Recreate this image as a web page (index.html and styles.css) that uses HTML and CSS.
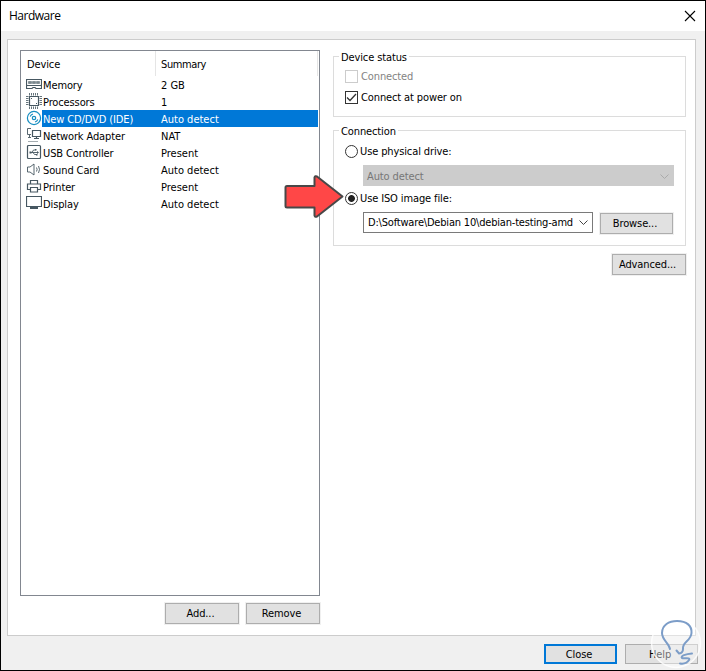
FILE: index.html
```html
<!DOCTYPE html>
<html lang="en">
<head>
<meta charset="utf-8">
<title>Hardware</title>
<link rel="stylesheet" href="styles.css">
</head>
<body>
<div class="window">
  <header class="titlebar">
    <span class="title">Hardware</span>
    <svg class="close-icon" width="12" height="12" viewBox="0 0 12 12"><path d="M1 1L11 11M11 1L1 11"/></svg>
  </header>
  <main class="panel">
    <section class="left">
      <div class="list">
        <div class="row head"><span class="device">Device</span><span class="summary">Summary</span></div>
        <div class="row"><svg class="icon" viewBox="0 0 16 16"><path d="M.5 3.500h15v6h-15zM.5 9.500v3H6l1-1h2l1 1h5.500v-3"/><path class="chips" d="M2.500 5.500h3v2h-3zM6.500 5.500h3v2h-3zM10.500 5.500h3v2h-3z"/></svg><span class="device">Memory</span><span class="summary">2 GB</span></div>
        <div class="row"><svg class="icon" viewBox="0 0 16 16"><path d="M3.500 3.500h9v9h-9z"/><path class="pins" d="M3.500 0v2.500M5.500 0v2.500M7.500 0v2.500M9.500 0v2.500M11.500 0v2.500M3.500 13.500V16M5.500 13.500V16M7.500 13.500V16M9.500 13.500V16M11.500 13.500V16M0 3.500h2.500M0 5.500h2.500M0 7.500h2.500M0 9.500h2.500M0 11.500h2.500M13.500 3.500H16M13.500 5.500H16M13.500 7.500H16M13.500 9.500H16M13.500 11.500H16"/><path d="M5 5.500h1M10 10.500h1"/></svg><span class="device">Processors</span><span class="summary">1</span></div>
        <div class="row selected"><svg class="icon disc" viewBox="0 0 16 16"><circle cx="8" cy="8" r="6.600"/><circle cx="8" cy="8" r="1.700"/><path d="M4.200 6.500Q5 4.500 7 4M11.800 9.500Q11 11.500 9 12"/></svg><span class="device">New CD/DVD (IDE)</span><span class="summary">Auto detect</span></div>
        <div class="row"><svg class="icon" viewBox="0 0 16 16"><path d="M6.500 3.500h8v6h-8zM10.500 9.500v2M8 11.500h5"/><path class="thin" d="M5 1.500H1.500v6H5M3.500 8v2M2 10.500h3"/><path class="dash" d="M2.500 14.500h9"/></svg><span class="device">Network Adapter</span><span class="summary">NAT</span></div>
        <div class="row"><svg class="icon" viewBox="0 0 16 16"><rect x="1.500" y="1.500" width="13" height="13" rx="1"/><path class="thin" d="M4 8.500h8M6 8.500l1.500-2.500h2M7 8.500l1.500 2h2"/><path class="fill" d="M3.500 7.500h2v2h-2zM9 5h1.500v1.500H9zM10 10h1.500v1.500H10zM11 7l2 1.500-2 1.500z"/></svg><span class="device">USB Controller</span><span class="summary">Present</span></div>
        <div class="row"><svg class="icon" viewBox="0 0 16 16"><path class="thin" d="M1.500 6v5h2.500l4 3V3l-4 3zM10.500 6.500q1.200 2 0 4M12.500 5q2 3.500 0 7"/></svg><span class="device">Sound Card</span><span class="summary">Auto detect</span></div>
        <div class="row"><svg class="icon" viewBox="0 0 16 16"><path d="M4.500 6V2.500h7V6M4 11.500H1.500v-5.500h13v5.500H12M4.500 9.500h7v4.500h-7z"/></svg><span class="device">Printer</span><span class="summary">Present</span></div>
        <div class="row"><svg class="icon" viewBox="0 0 16 16"><path d="M.5 1.500h15v10h-15z"/><path class="stand" d="M4 13h8"/></svg><span class="device">Display</span><span class="summary">Auto detect</span></div>
      </div>
      <div class="actions"><button>Add...</button><button>Remove</button></div>
    </section>
    <section class="right">
      <div class="group status">
        <span class="legend">Device status</span>
        <label class="option muted"><span class="box"></span>Connected</label>
        <label class="option"><span class="box on"><svg width="11" height="11" viewBox="0 0 11 11"><path d="M1 5.500L4 8.500L10 2"/></svg></span>Connect at power on</label>
      </div>
      <div class="group connection">
        <span class="legend">Connection</span>
        <label class="option"><span class="radio"></span><span>Use physical drive:</span></label>
        <div class="combo disabled"><span>Auto detect</span><svg class="chevron" width="9" height="5" viewBox="0 0 9 5"><path d="M.5.5l4 4 4-4"/></svg></div>
        <label class="option iso"><span class="radio on"></span><span>Use ISO image file:</span></label>
        <div class="file">
          <div class="combo"><span class="path">D:\Software\Debian 10\debian-testing-amd</span><svg class="chevron" width="9" height="5" viewBox="0 0 9 5"><path d="M.5.5l4 4 4-4"/></svg></div>
          <button>Browse...</button>
        </div>
      </div>
      <button class="advanced">Advanced...</button>
    </section>
  </main>
  <footer class="footer"><button class="primary">Close</button><button>Help</button></footer>
  <svg class="arrow" width="64" height="48" viewBox="0 0 64 48"><path d="M5.500 15.500Q5.500 14 7 14H34.500V5.500Q35 3.500 37 4.500L62.500 24.500L37 44.500Q35 45.500 34.500 43.500V35.500H7Q5.500 35.500 5.500 34z"/></svg>
  <svg class="watermark" width="54" height="54" viewBox="0 0 54 54"><circle class="disk" cx="26" cy="27" r="24.500"/><path class="bulb" d="M20 33C19 27 12 24 12 17C12 9 19 5 27 5C37 5 42 10 41.500 17C41 25 32 26 33 33Q33 37 29 37.500L26.500 34.500M42 37.500C36 38 30 40 32 42C34 43 41 41 39 44C37 47 33 48 30 47.500"/></svg>
</div>
</body>
</html>
```
FILE: styles.css
```css
* { box-sizing: border-box; }
body { margin: 0; font: 11px/17px "DejaVu Sans Condensed", "DejaVu Sans", sans-serif; font-stretch: condensed; letter-spacing: -.12px; color: #000; }
svg { fill: none; display: block; flex: none; }
.window { position: relative; width: 706px; height: 671px; border: 1px solid #000; background: #f0f0f0; overflow: hidden; }
.titlebar { height: 30px; background: #fff; display: flex; align-items: center; justify-content: space-between; padding: 0 9px 0 8px; }
.title { font: 12px/16px "Open Sans", sans-serif; letter-spacing: -.5px; }
.close-icon { stroke: #000; stroke-width: 1.1; }
.panel { height: 597px; margin: 8px 9px 0 6px; border: 1px solid #ccc; background: #fff; padding: 10px 0 0 12px; display: flex; gap: 13px; }
.left { width: 300px; }
.list { height: 546px; border: 1px solid #828790; padding-right: 1px; }
.row { display: flex; height: 17px; line-height: 19px; padding-left: 5px; }
.head { height: 25px; line-height: 28px; padding-left: 6px; border-right: 1px solid #e5e5e5; }
.row .device { width: 112px; padding-left: 1px; }
.head .device { width: 129px; padding-left: 0; border-right: 1px solid #e5e5e5; }
.row .summary { padding-left: 7px; letter-spacing: 0; }
.head .summary { padding-left: 5px; letter-spacing: -.4px; }
.icon { width: 16px; height: 16px; stroke: #465761; stroke-width: 1.2; }
.thin { stroke-width: .9; }
.chips { fill: #79868d; stroke: #79868d; stroke-width: .8; }
.pins { stroke-width: 1; stroke: #65747c; }
.fill { fill: #465761; stroke: none; }
.dash { stroke-dasharray: 1 1; }
.stand { stroke-width: 2; }
.disc { stroke: #168dc0; background: #fff; }
.selected { color: #fff; background: linear-gradient(90deg, #fff 21px, #0078d7 21px); }
button { font: inherit; letter-spacing: inherit; line-height: 17px; width: 74px; height: 20px; padding: 0 3px 0 0; border: 1px solid #adadad; background: #e1e1e1; color: #000; }
.actions { display: flex; justify-content: flex-end; gap: 7px; margin-top: 7px; }
.panel button { height: 21px; box-shadow: 0 0 0 1px #f0f0f0; }
.right { width: 353px; display: flex; flex-direction: column; padding-top: 6px; }
.group { border: 1px solid #dcdcdc; padding-left: 11px; display: flex; flex-direction: column; }
.legend { align-self: flex-start; height: 17px; line-height: 19px; margin: -9px 0 0 -6px; padding: 0 2px; background: #fff; }
.status { height: 61px; }
.option { display: flex; align-items: center; height: 20px; gap: 3px; }
.status .option:nth-of-type(1) { margin-top: 2px; height: 19px; margin-bottom: 1px; }
.muted { color: #838383; }
.box { width: 13px; height: 13px; border: 1px solid #ccc; }
.box.on { border-color: #333; }
.box path { stroke: #333; stroke-width: 1.3; }
.connection { height: 116px; margin-top: 13px; }
.connection .option { margin-top: 3px; height: 18px; gap: 2px; }
.radio { width: 13px; height: 13px; border: 1px solid #333; border-radius: 50%; }
.radio.on { background: radial-gradient(circle, #222 3px, #fff 3.800px); }
.combo { display: flex; align-items: center; justify-content: space-between; width: 230px; height: 21px; border: 1px solid #7a7a7a; padding: 0 4px; background: #fff; }
.combo.disabled { width: 311px; margin: 5px 0 0 18px; border-color: #ccc; background: #ccc; color: #777; padding: 1px 4px 0 3px; }
.chevron { stroke: #444; }
.disabled .chevron { stroke: #aaa; }
.path { width: 206px; overflow: hidden; white-space: nowrap; letter-spacing: -.19px; }
.file { display: flex; gap: 7px; margin: 5px 0 0 18px; }
.file button { width: 73px; }
.panel .file button { margin-top: 1px; }
.advanced { align-self: flex-end; margin-top: 8px; }
.footer { display: flex; justify-content: flex-end; gap: 8px; padding: 8px 7px 0 0; }
.footer button { width: 73px; }
.footer .primary { border: 2px solid #0078d7; line-height: 15px; }
.arrow { position: absolute; left: 279px; top: 171px; }
.arrow path { fill: #ff4747; stroke: #484848; stroke-width: 2; stroke-linejoin: round; }
.watermark { position: absolute; left: 649px; top: 615px; }
.disk { fill: #fff; fill-opacity: .42; stroke: #fff; stroke-width: 1.5; stroke-opacity: .8; }
.bulb { stroke: #7c9dc8; stroke-width: 2; stroke-linecap: round; }
```
